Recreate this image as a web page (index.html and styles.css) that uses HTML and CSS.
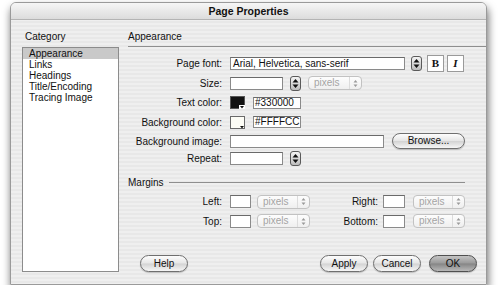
FILE: index.html
```html
<!DOCTYPE html>
<html>
<head>
    <meta charset="utf-8">
    <link rel="stylesheet" href="styles.css">
</head>
<body>
    <div class="window">
        <div class="titlebar">Page Properties</div>

        <div class="body">
            <div class="sidebar">
                <div class="side-label">Category</div>
                <ul class="category-list">
                    <li class="selected">Appearance</li>
                    <li>Links</li>
                    <li>Headings</li>
                    <li>Title/Encoding</li>
                    <li>Tracing Image</li>
                </ul>
            </div>

            <div class="panel">
                <div class="panel-title">Appearance</div>

                <div class="form">
                    <div class="row h20">
                        <span class="lbl">Page font:</span>
                        <span class="field w-font">Arial, Helvetica, sans-serif</span>
                        <span class="stepper ml6">
                            <svg width="7" height="11" viewBox="0 0 7 11"><path d="M0.5 4.5 L3.5 1 L6.5 4.5 Z M0.5 6.5 L3.5 10 L6.5 6.5 Z" fill="#111"/></svg>
                        </span>
                        <span class="style-btn bold ml5">B</span>
                        <span class="style-btn italic ml3">I</span>
                    </div>

                    <div class="row h20">
                        <span class="lbl">Size:</span>
                        <span class="field w-short"></span>
                        <span class="stepper ml7">
                            <svg width="7" height="11" viewBox="0 0 7 11"><path d="M0.5 4.5 L3.5 1 L6.5 4.5 Z M0.5 6.5 L3.5 10 L6.5 6.5 Z" fill="#111"/></svg>
                        </span>
                        <span class="select ml7 w-sel">
                            <span class="select-text">pixels</span>
                            <span class="select-arrows">
                                <svg width="5" height="9" viewBox="0 0 5 9"><path d="M0.5 3.5 L2.5 1 L4.5 3.5 Z M0.5 5.5 L2.5 8 L4.5 5.5 Z" fill="#9a9a9a"/></svg>
                            </span>
                        </span>
                    </div>

                    <div class="row h19">
                        <span class="lbl">Text color:</span>
                        <span class="swatch">
                            <svg width="15" height="13" viewBox="0 0 15 13">
                                <rect x="0.5" y="0.5" width="14" height="12" fill="#111" stroke="#555"/>
                                <path d="M9 13 L9 9 L15 9 L15 13 Z" fill="#fff"/>
                                <path d="M10 10 L14 10 L12 12.5 Z" fill="#111"/>
                            </svg>
                        </span>
                        <span class="field w-hex ml8">#330000</span>
                    </div>

                    <div class="row h20">
                        <span class="lbl">Background color:</span>
                        <span class="swatch">
                            <svg width="15" height="13" viewBox="0 0 15 13">
                                <rect x="0.5" y="0.5" width="14" height="12" fill="#fdfdf6" stroke="#6a6a6a"/>
                                <path d="M10 10 L14 10 L12 12.5 Z" fill="#111"/>
                            </svg>
                        </span>
                        <span class="field w-hex ml8">#FFFFCC</span>
                    </div>

                    <div class="row h18">
                        <span class="lbl">Background image:</span>
                        <span class="field w-image"></span>
                        <span class="aqua-btn browse ml8">Browse...</span>
                    </div>

                    <div class="row h17">
                        <span class="lbl">Repeat:</span>
                        <span class="field w-short"></span>
                        <span class="stepper ml7">
                            <svg width="7" height="11" viewBox="0 0 7 11"><path d="M0.5 4.5 L3.5 1 L6.5 4.5 Z M0.5 6.5 L3.5 10 L6.5 6.5 Z" fill="#111"/></svg>
                        </span>
                    </div>
                </div>

                <div class="section-head">
                    <span>Margins</span>
                    <span class="rule"></span>
                </div>

                <div class="row h19">
                    <span class="lbl">Left:</span>
                    <span class="field w-tiny"></span>
                    <span class="select ml6 w-sel2">
                        <span class="select-text">pixels</span>
                        <span class="select-arrows">
                            <svg width="5" height="9" viewBox="0 0 5 9"><path d="M0.5 3.5 L2.5 1 L4.5 3.5 Z M0.5 5.5 L2.5 8 L4.5 5.5 Z" fill="#9a9a9a"/></svg>
                        </span>
                    </span>
                    <span class="lbl2">Right:</span>
                    <span class="field w-tiny2"></span>
                    <span class="select ml8 w-sel3">
                        <span class="select-text">pixels</span>
                        <span class="select-arrows">
                            <svg width="5" height="9" viewBox="0 0 5 9"><path d="M0.5 3.5 L2.5 1 L4.5 3.5 Z M0.5 5.5 L2.5 8 L4.5 5.5 Z" fill="#9a9a9a"/></svg>
                        </span>
                    </span>
                </div>

                <div class="row h20">
                    <span class="lbl">Top:</span>
                    <span class="field w-tiny"></span>
                    <span class="select ml6 w-sel2">
                        <span class="select-text">pixels</span>
                        <span class="select-arrows">
                            <svg width="5" height="9" viewBox="0 0 5 9"><path d="M0.5 3.5 L2.5 1 L4.5 3.5 Z M0.5 5.5 L2.5 8 L4.5 5.5 Z" fill="#9a9a9a"/></svg>
                        </span>
                    </span>
                    <span class="lbl2">Bottom:</span>
                    <span class="field w-tiny2"></span>
                    <span class="select ml8 w-sel3">
                        <span class="select-text">pixels</span>
                        <span class="select-arrows">
                            <svg width="5" height="9" viewBox="0 0 5 9"><path d="M0.5 3.5 L2.5 1 L4.5 3.5 Z M0.5 5.5 L2.5 8 L4.5 5.5 Z" fill="#9a9a9a"/></svg>
                        </span>
                    </span>
                </div>

                <div class="buttons">
                    <span class="aqua-btn help">Help</span>
                    <span class="spacer"></span>
                    <span class="aqua-btn">Apply</span>
                    <span class="aqua-btn ml5">Cancel</span>
                    <span class="aqua-btn default ml8">OK</span>
                </div>
            </div>
        </div>
    </div>
</body>
</html>
```

FILE: styles.css
```css
body {
    margin: 0;
    background: #fff;
    font-family: 'Liberation Sans', Arial, sans-serif;
    font-size: 10px;
    color: #111;
}

.window {
    margin: 2px 0 0 10px;
    width: 475px;
    height: 281px;
    border: 1px solid #9a9a9a;
    border-radius: 6px 6px 0 0;
    background: repeating-linear-gradient(to bottom, #efefef 0, #efefef 2px, #e8e8e8 2px, #e8e8e8 4px);
    box-shadow: 1px 5px 9px rgba(0, 0, 0, 0.6);
    display: flex;
    flex-direction: column;
}

.titlebar {
    height: 16px;
    line-height: 16px;
    border-bottom: 1px solid #b4b4b4;
    border-radius: 5px 5px 0 0;
    background: linear-gradient(#f6f6f6, #dcdcdc);
    text-align: center;
    font-weight: bold;
    font-size: 10.5px;
    color: #111;
}

.body {
    flex: 1;
    display: flex;
    padding: 11px 0 12px 11px;
}

/* left category list */
.sidebar {
    display: flex;
    flex-direction: column;
    width: 97px;
    margin-right: 9px;
}

.side-label {
    line-height: 12px;
    padding-left: 3px;
    margin-bottom: 4px;
}

.category-list {
    flex: 1;
    margin: 0;
    padding: 0;
    list-style: none;
    background: #fff;
    border: 1px solid #8c8c8c;
}

.category-list li {
    line-height: 11px;
    padding-left: 6px;
}

.category-list li.selected {
    background: #c9c9c9;
}

/* right panel */
.panel {
    flex: 1;
    display: flex;
    flex-direction: column;
}

.panel-title {
    line-height: 12px;
    padding-bottom: 3px;
    border-bottom: 1px solid #8e8e8e;
}

.form {
    margin-top: 6px;
}

.row {
    display: flex;
    align-items: center;
}

.h17 { height: 17px; }
.h18 { height: 18px; }
.h19 { height: 19px; }
.h20 { height: 20px; }

.ml3 { margin-left: 3px; }
.ml5 { margin-left: 5px; }
.ml6 { margin-left: 6px; }
.ml7 { margin-left: 7px; }
.ml8 { margin-left: 8px; }

.lbl {
    width: 94px;
    margin-right: 8px;
    text-align: right;
    white-space: nowrap;
}

.lbl2 {
    width: 63px;
    margin: 0 5px;
    text-align: right;
}

.field {
    box-sizing: border-box;
    height: 13px;
    line-height: 11px;
    padding-left: 2px;
    background: #fff;
    border: 1px solid #8a8a8a;
    border-top-color: #6a6a6a;
    white-space: nowrap;
    overflow: hidden;
}

.w-font { width: 175px; }
.w-short { width: 53px; }
.w-hex { width: 48px; height: 12px; line-height: 10px; padding-left: 1px; }
.w-image { width: 154px; }
.w-tiny { width: 21px; }
.w-tiny2 { width: 22px; }

.stepper {
    box-sizing: border-box;
    width: 11px;
    height: 15px;
    border: 1px solid #5a5a5a;
    border-radius: 3px;
    background: linear-gradient(#f4f4f4, #bcbcbc);
    display: flex;
    align-items: center;
    justify-content: center;
}

.stepper svg {
    display: block;
}

.style-btn {
    box-sizing: border-box;
    width: 17px;
    height: 17px;
    border: 1px solid #9a9a9a;
    background: #fff;
    display: flex;
    align-items: center;
    justify-content: center;
    font-family: 'Liberation Serif', 'Times New Roman', serif;
    font-size: 11px;
    font-weight: bold;
}

.style-btn.italic {
    font-style: italic;
}

.select {
    box-sizing: border-box;
    height: 14px;
    display: flex;
    border: 1px solid #c2c2c2;
    border-radius: 4px;
    background: linear-gradient(#fdfdfd, #efefef);
    color: #a4a4a4;
}

.w-sel { width: 54px; }
.w-sel2 { width: 53px; }
.w-sel3 { width: 52px; }

.select-text {
    flex: 1;
    padding-left: 5px;
    line-height: 12px;
}

.select-arrows {
    width: 11px;
    border-left: 1px solid #dcdcdc;
    display: flex;
    align-items: center;
    justify-content: center;
}

.select-arrows svg {
    display: block;
}

.swatch svg {
    display: block;
}

.aqua-btn {
    box-sizing: border-box;
    width: 48px;
    height: 17px;
    line-height: 15px;
    text-align: center;
    border: 1px solid #6f6f6f;
    border-radius: 9px;
    background: linear-gradient(#fdfdfd 0%, #e6e6e6 48%, #d3d3d3 52%, #f6f6f6 100%);
    box-shadow: 0 1px 1px rgba(0, 0, 0, 0.2);
    color: #111;
}

.aqua-btn.browse {
    width: 73px;
    height: 16px;
    line-height: 14px;
}

.aqua-btn.default {
    border-color: #505050;
    background: linear-gradient(#c4c4c4 0%, #999 48%, #858585 52%, #b8b8b8 100%);
}

.section-head {
    display: flex;
    align-items: center;
    height: 20px;
    margin-top: 5px;
}

.section-head .rule {
    flex: 1;
    height: 1px;
    margin: 0 21px 0 5px;
    background: #8e8e8e;
}

.buttons {
    margin-top: auto;
    display: flex;
    align-items: center;
    padding: 0 9px 0 12px;
}

.spacer {
    flex: 1;
}
```
